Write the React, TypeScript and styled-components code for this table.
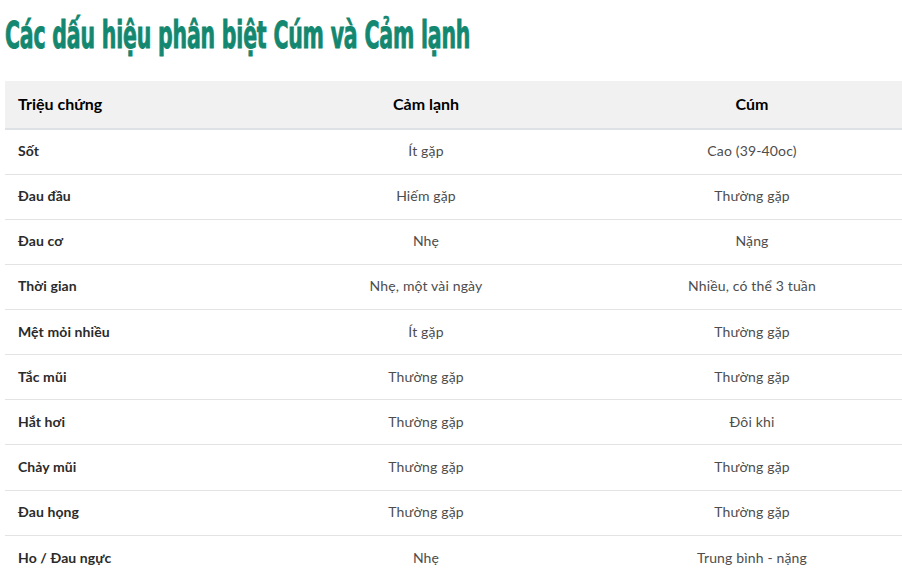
import React from "react";
import styled, { createGlobalStyle } from "styled-components";

const Global = createGlobalStyle`
  html, body { margin: 0; padding: 0; background: #fff; }
  body { font-family: Lato, "Open Sans", "Liberation Sans", sans-serif; }
`;

const Page = styled.div`
  padding: 0 0 0 5px;
  width: 897px;
`;

const TitleWrap = styled.div`
  height: 81px;
  padding-top: 17px;
  box-sizing: border-box;
  overflow: hidden;
`;

const Title = styled.h2`
  margin: 0;
  font-family: "DejaVu Sans Condensed", "Liberation Sans Narrow", "DejaVu Sans", sans-serif;
  font-weight: 700;
  font-size: 37px;
  line-height: 37px;
  color: #13876f;
  white-space: nowrap;
  transform: scaleX(0.615);
  transform-origin: left center;
  -webkit-text-stroke: 0.9px #13876f;
  letter-spacing: -0.3px;
`;

const Table = styled.table`
  width: 897px;
  border-collapse: collapse;
  table-layout: fixed;
  font-size: 14px;
`;

const HeadRow = styled.tr`
  background: #f1f1f1;
  border-bottom: 2px solid #dee2e6;
`;

const Th = styled.th<{ $align: "left" | "center"; $w: number }>`
  width: ${(p) => p.$w}px;
  height: 48px;
  padding: 0 13px 2px;
  text-align: ${(p) => p.$align};
  font-size: 16px;
  font-weight: 700;
  color: #000;
  box-sizing: border-box;
`;

const Row = styled.tr<{ $last?: boolean }>`
  border-bottom: ${(p) => (p.$last ? "none" : "1px solid #e3e3e3")};
`;

const Td = styled.td<{ $first?: boolean }>`
  height: 45.15px;
  padding: 0 13px 2px;
  box-sizing: border-box;
  text-align: ${(p) => (p.$first ? "left" : "center")};
  font-weight: ${(p) => (p.$first ? 700 : 400)};
  color: ${(p) => (p.$first ? "#2b2b2b" : "#4d4d4d")};
  letter-spacing: ${(p) => (p.$first ? "0.1px" : "0.15px")};
`;

const rows: [string, string, string][] = [
  ["Sốt", "Ít gặp", "Cao (39-40oc)"],
  ["Đau đầu", "Hiếm gặp", "Thường gặp"],
  ["Đau cơ", "Nhẹ", "Nặng"],
  ["Thời gian", "Nhẹ, một vài ngày", "Nhiều, có thể 3 tuần"],
  ["Mệt mỏi nhiều", "Ít gặp", "Thường gặp"],
  ["Tắc mũi", "Thường gặp", "Thường gặp"],
  ["Hắt hơi", "Thường gặp", "Đôi khi"],
  ["Chảy mũi", "Thường gặp", "Thường gặp"],
  ["Đau họng", "Thường gặp", "Thường gặp"],
  ["Ho / Đau ngực", "Nhẹ", "Trung bình - nặng"],
];

export default function App() {
  return (
    <Page>
      <Global />
      <TitleWrap>
        <Title>Các dấu hiệu phân biệt Cúm và Cảm lạnh</Title>
      </TitleWrap>
      <Table>
        <thead>
          <HeadRow>
            <Th $align="left" $w={245}>Triệu chứng</Th>
            <Th $align="center" $w={352}>Cảm lạnh</Th>
            <Th $align="center" $w={300}>Cúm</Th>
          </HeadRow>
        </thead>
        <tbody>
          {rows.map((r, i) => (
            <Row key={i} $last={i === rows.length - 1}>
              <Td $first>{r[0]}</Td>
              <Td>{r[1]}</Td>
              <Td>{r[2]}</Td>
            </Row>
          ))}
        </tbody>
      </Table>
    </Page>
  );
}
